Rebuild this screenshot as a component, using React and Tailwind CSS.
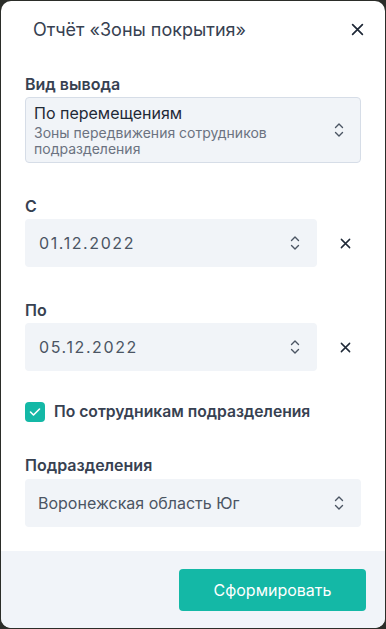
import React from 'react';

function Chevrons({ className = '' }) {
  return (
    <svg width="10" height="16" viewBox="0 0 10 16" fill="none" className={className}>
      <path d="M1.5 5.5 L5 2 L8.5 5.5" stroke="currentColor" strokeWidth="1.4" strokeLinecap="round" strokeLinejoin="round" />
      <path d="M1.5 10.5 L5 14 L8.5 10.5" stroke="currentColor" strokeWidth="1.4" strokeLinecap="round" strokeLinejoin="round" />
    </svg>
  );
}

function Cross({ size = 12, className = '' }) {
  return (
    <svg width={size} height={size} viewBox="0 0 12 12" fill="none" className={className}>
      <path d="M1.5 1.5 L10.5 10.5 M10.5 1.5 L1.5 10.5" stroke="currentColor" strokeWidth="1.6" strokeLinecap="round" />
    </svg>
  );
}

function Label({ children }) {
  return <div className="text-[16px] font-semibold text-[#374151] leading-5">{children}</div>;
}

function DateField({ label, value }) {
  return (
    <div>
      <Label>{label}</Label>
      <div className="mt-[3px] flex items-center">
        <div className="w-[292px] h-12 rounded-[4px] bg-[#f1f4f8] flex items-center justify-between pl-[14px] pr-[17px]">
          <span className="text-[16px] tracking-[0.1em] text-[#4b5563]">{value}</span>
          <Chevrons className="text-[#4b5563]" />
        </div>
        <button className="ml-[23px] text-[#1f2937]">
          <Cross size={11} />
        </button>
      </div>
    </div>
  );
}

export default function App() {
  return (
    <div className="w-[386px] h-[629px] bg-[#2b2d29] p-px" style={{ fontFamily: 'Inter, "Noto Sans", sans-serif' }}>
      <div className="h-[627px] bg-white rounded-[10px] overflow-hidden flex flex-col">
        <div className="flex-1 px-6">
          {/* Заголовок */}
          <div className="flex items-center justify-between h-[56px] pl-2">
            <h1 className="text-[18px] text-[#374151]">Отчёт «Зоны покрытия»</h1>
            <button className="-mr-[3px] text-[#1f2937]">
              <Cross size={13} />
            </button>
          </div>

          {/* Вид вывода */}
          <div className="mt-[17px]">
            <Label>Вид вывода</Label>
            <div className="mt-[3px] w-[336px] h-[66px] rounded-[4px] border border-[#d6dde7] bg-[#f1f4f8] flex items-center justify-between pl-2 pr-[16px]">
              <div>
                <div className="text-[16px] text-[#1f2937] leading-[19px]">По перемещениям</div>
                <div className="text-[14px] text-[#6b7280] leading-[15.5px] mt-[2px]">
                  Зоны передвижения сотрудников
                  <br />
                  подразделения
                </div>
              </div>
              <Chevrons className="text-[#4b5563]" />
            </div>
          </div>

          <div className="mt-[33px]">
            <DateField label="С" value="01.12.2022" />
          </div>
          <div className="mt-[33px]">
            <DateField label="По" value="05.12.2022" />
          </div>

          {/* Чекбокс */}
          <label className="mt-[31px] h-5 flex items-center">
            <span className="w-5 h-5 rounded-[4px] bg-[#14b8a6] flex items-center justify-center">
              <svg width="12" height="10" viewBox="0 0 12 10" fill="none">
                <path d="M1.5 5 L4.5 8 L10.5 2" stroke="white" strokeWidth="1.6" strokeLinecap="round" strokeLinejoin="round" />
              </svg>
            </span>
            <span className="ml-[9px] text-[15.7px] font-semibold text-[#374151] leading-5">По сотрудникам подразделения</span>
          </label>

          {/* Подразделения */}
          <div className="mt-[33px]">
            <Label>Подразделения</Label>
            <div className="mt-[4px] w-[336px] h-12 rounded-[4px] bg-[#f1f4f8] flex items-center justify-between pl-[13px] pr-[17px]">
              <span className="text-[16px] text-[#4b5563]">Воронежская область Юг</span>
              <Chevrons className="text-[#4b5563]" />
            </div>
          </div>
        </div>

        {/* Футер */}
        <div className="h-[77px] bg-[#f1f4f9] flex justify-end items-start pt-[18px] pr-[19px]">
          <button className="w-[187px] h-[42px] rounded-[4px] bg-[#14b8a6] text-white text-[16px]">
            Сформировать
          </button>
        </div>
      </div>
    </div>
  );
}
